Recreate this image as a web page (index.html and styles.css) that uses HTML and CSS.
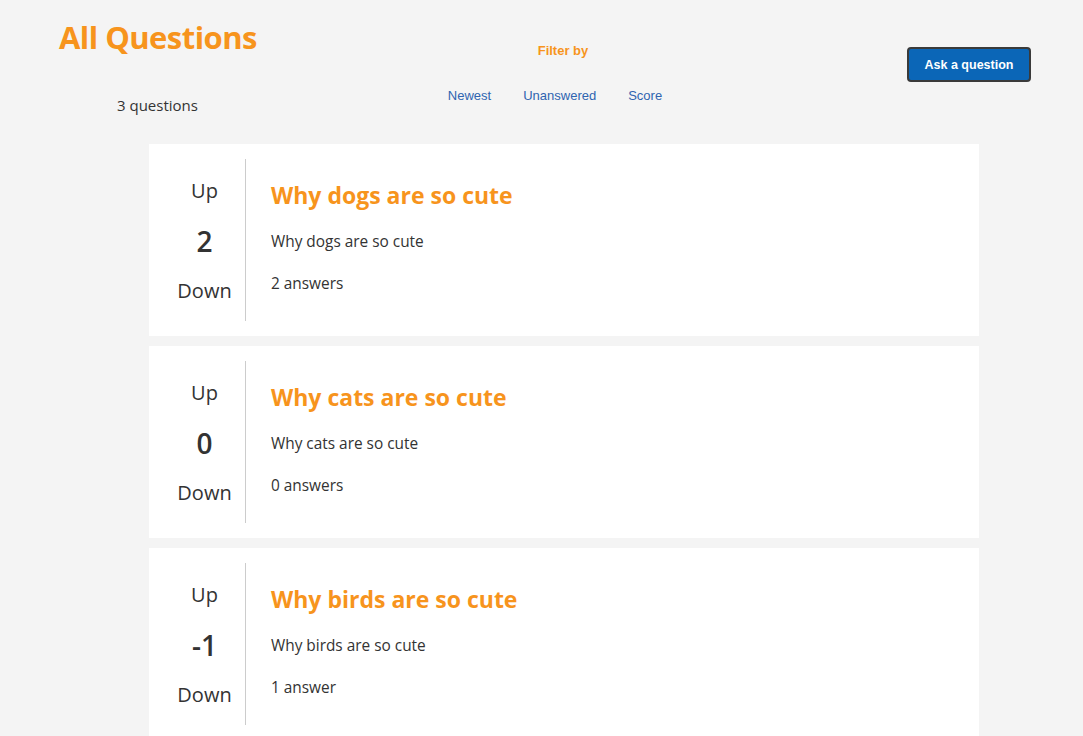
FILE: index.html
```html
<!DOCTYPE html>
<html>
<head>
<meta charset="utf-8">
<link rel="stylesheet" href="styles.css">
</head>
<body>
<header class="top">
  <div class="left">
    <h1 class="page-title">All Questions</h1>
    <div class="count">3 questions</div>
  </div>
  <div class="center">
    <div class="filter-label">Filter by</div>
    <nav class="filters">
      <a class="filter" href="#">Newest</a>
      <a class="filter" href="#">Unanswered</a>
      <a class="filter" href="#">Score</a>
    </nav>
  </div>
  <div class="right">
    <button class="ask">Ask a question</button>
  </div>
</header>
<main class="list">
  <article class="card">
    <div class="votes">
      <div class="vote-label">Up</div>
      <div class="vote-num">2</div>
      <div class="vote-label">Down</div>
    </div>
    <div class="content">
      <h2 class="q-title">Why dogs are so cute</h2>
      <p class="q-body">Why dogs are so cute</p>
      <p class="q-answers">2 answers</p>
    </div>
  </article>
  <article class="card">
    <div class="votes">
      <div class="vote-label">Up</div>
      <div class="vote-num">0</div>
      <div class="vote-label">Down</div>
    </div>
    <div class="content">
      <h2 class="q-title">Why cats are so cute</h2>
      <p class="q-body">Why cats are so cute</p>
      <p class="q-answers">0 answers</p>
    </div>
  </article>
  <article class="card">
    <div class="votes">
      <div class="vote-label">Up</div>
      <div class="vote-num">-1</div>
      <div class="vote-label">Down</div>
    </div>
    <div class="content">
      <h2 class="q-title">Why birds are so cute</h2>
      <p class="q-body">Why birds are so cute</p>
      <p class="q-answers">1 answer</p>
    </div>
  </article>
</main>
</body>
</html>
```

FILE: styles.css
```css
html, body {
  margin: 0;
  padding: 0;
}
body {
  background: #f4f4f4;
  font-family: "Open Sans", "Noto Sans", sans-serif;
  color: #333;
}
.top {
  display: flex;
  height: 144px;
}
.left {
  width: 380px;
  padding-left: 59px;
  box-sizing: border-box;
}
.page-title {
  margin: 17px 0 0;
  font-size: 31px;
  line-height: 40px;
  font-weight: 700;
  color: #f7941d;
  letter-spacing: -0.55px;
}
.count {
  margin: 38px 0 0 58px;
  font-size: 15px;
  line-height: 20px;
  color: #333;
}
.center {
  width: 366px;
  display: flex;
  flex-direction: column;
  align-items: center;
  font-family: "Liberation Sans", Arial, sans-serif;
}
.filter-label {
  margin-top: 43px;
  font-size: 13px;
  line-height: 15px;
  font-weight: 700;
  color: #f7941d;
}
.filters {
  display: flex;
  gap: 32px;
  margin-top: 30px;
  margin-right: 16px;
}
.filter {
  font-size: 13px;
  line-height: 15px;
  color: #2f64b0;
  text-decoration: none;
}
.right {
  flex: 1;
  display: flex;
  justify-content: flex-end;
  align-items: flex-start;
  padding-right: 52px;
}
.ask {
  margin-top: 47px;
  width: 124px;
  height: 35px;
  background: #0b66b7;
  color: #fff;
  border: 2px solid #3a3a3a;
  border-radius: 4px;
  font-family: "Liberation Sans", Arial, sans-serif;
  font-size: 12.5px;
  font-weight: 700;
  padding: 0;
}
.list {
  margin-left: 149px;
  width: 830px;
  display: flex;
  flex-direction: column;
  gap: 10px;
}
.card {
  background: #fff;
  display: flex;
  padding: 15px;
}
.votes {
  width: 82px;
  height: 162px;
  box-sizing: border-box;
  padding-top: 2px;
  border-right: 1px solid #ccc;
  display: flex;
  flex-direction: column;
  justify-content: center;
  align-items: center;
  gap: 20px;
}
.vote-label {
  font-size: 20px;
  line-height: 30px;
  color: #333;
}
.vote-num {
  font-size: 28px;
  line-height: 30px;
  font-weight: 600;
  color: #333;
}
.content {
  padding-left: 25px;
}
.q-title {
  margin: 21px 0 0;
  font-size: 23px;
  line-height: 30px;
  font-weight: 700;
  color: #f7941d;
}
.q-body {
  margin: 22px 0 0;
  font-size: 15.4px;
  line-height: 20px;
}
.q-answers {
  margin: 22px 0 0;
  font-size: 15.4px;
  line-height: 20px;
}
```
